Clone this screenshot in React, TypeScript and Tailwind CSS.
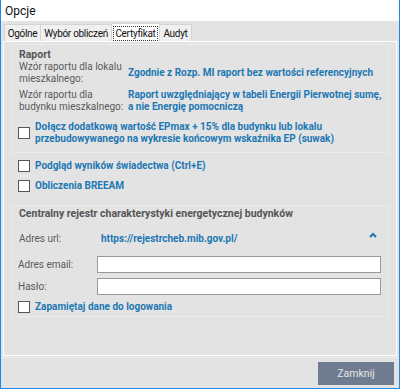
import React from "react";

const font = { fontFamily: 'Roboto, "Liberation Sans", Arial, sans-serif' };

function Check({ children, className = "" }: { children: React.ReactNode; className?: string }) {
  return (
    <div className={"flex items-center gap-[5px] " + className}>
      <div className="h-[12px] w-[12px] shrink-0 border border-[#555] bg-white" />
      <div className="whitespace-nowrap text-[10px] font-bold leading-[12px] text-[#1c78b4]">{children}</div>
    </div>
  );
}

export default function App() {
  return (
    <div
      className="flex h-[389px] w-[400px] flex-col border-b border-l border-r border-[#1e8ae6] bg-[#e3e3e3] text-[#333]"
      style={font}
    >
      <div className="flex h-[21px] shrink-0 items-center bg-white pl-[4px] text-[12px] text-[#111]">Opcje</div>
      <div className="flex h-[20px] shrink-0 items-end pl-[3px] text-[10px] tracking-[-0.3px] text-[#111]">
        <div className="flex h-[17px] w-[37px] items-center justify-center border border-b-0 border-[#d4d4d4] bg-[#f0f0f0]">Ogólne</div>
        <div className="flex h-[17px] w-[71px] items-center justify-center border border-b-0 border-l-0 border-[#d4d4d4] bg-[#f0f0f0]">Wybór obliczeń</div>
        <div className="-mb-[1px] flex h-[19px] w-[48px] items-center justify-center border border-b-0 border-l-0 border-[#d4d4d4] bg-white">
          <span className="border border-dotted border-[#333] px-[1px] leading-[13px]">Certyfikat</span>
        </div>
        <div className="flex h-[17px] w-[32px] items-center justify-center border border-b-0 border-l-0 border-[#d4d4d4] bg-[#f0f0f0]">Audyt</div>
      </div>
      <div className="mx-[2px] flex h-[315px] shrink-0 flex-col border border-white bg-[#e3e3e3] px-[8px] pt-[2px]">
        <div className="border border-[#ececec] pb-[7px] pl-[6px] pr-[6px] pt-[3px]">
          <div className="text-[10.5px] font-bold leading-[13px] text-[#555]">Raport</div>
          <div className="flex">
            <div className="w-[109px] shrink-0 whitespace-nowrap text-[10px] leading-[12px] text-[#5a5a5a]">
              Wzór raportu dla lokalu
              <br />
              mieszkalnego:
            </div>
            <div className="flex items-center whitespace-nowrap text-[10px] font-bold leading-[12px] text-[#1c78b4]">
              Zgodnie z Rozp. MI raport bez wartości referencyjnych
            </div>
          </div>
          <div className="mt-[4px] flex">
            <div className="w-[109px] shrink-0 whitespace-nowrap text-[10px] leading-[12px] text-[#5a5a5a]">
              Wzór raportu dla
              <br />
              budynku mieszkalnego:
            </div>
            <div className="whitespace-nowrap text-[10px] font-bold leading-[12px] text-[#1c78b4]">
              Raport uwzględniający w tabeli Energii Pierwotnej sumę,
              <br />a nie Energię pomocniczą
            </div>
          </div>
          <Check className="-ml-[1px] mt-[8px]">
            Dołącz dodatkową wartość EPmax + 15% dla budynku lub lokalu
            <br />
            przebudowywanego na wykresie końcowym wskaźnika EP (suwak)
          </Check>
        </div>
        <Check className="ml-[6px] mt-[7px]">Podgląd wyników świadectwa (Ctrl+E)</Check>
        <Check className="ml-[6px] mt-[8px]">Obliczenia BREEAM</Check>
        <div className="mt-[13px] border border-[#ececec] pb-[3px] pl-[6px] pr-[6px] pt-[1px]">
          <div className="whitespace-nowrap text-[10.5px] font-bold leading-[13px] text-[#555]">
            Centralny rejestr charakterystyki energetycznej budynków
          </div>
          <div className="mt-[13px] flex h-[12px] items-center">
            <div className="w-[82px] shrink-0 text-[10px] leading-[12px] text-[#5a5a5a]">Adres url:</div>
            <div className="flex-1 text-[10px] font-bold leading-[12px] text-[#1c78b4]">https://rejestrcheb.mib.gov.pl/</div>
            <svg width="8" height="6" viewBox="0 0 8 6" className="mr-[4px] -mt-[8px]">
              <path d="M1 5 L4 2 L7 5" stroke="#1c78b4" strokeWidth="2" fill="none" />
            </svg>
          </div>
          <div className="mt-[11px] flex items-center">
            <div className="w-[79px] -ml-[1px] shrink-0 text-[10px] text-[#5a5a5a]">Adres email:</div>
            <div className="h-[17px] flex-1 border border-[#999] bg-white" />
          </div>
          <div className="mt-[5px] flex items-center">
            <div className="w-[79px] -ml-[1px] shrink-0 text-[10px] text-[#5a5a5a]">Hasło:</div>
            <div className="h-[17px] flex-1 border border-[#999] bg-white" />
          </div>
          <Check className="-ml-[1px] mt-[6px]">Zapamiętaj dane do logowania</Check>
        </div>
      </div>
      <div className="mt-[1px] border-t border-[#ececec]" />
      <div className="flex flex-1 items-start justify-end pr-[5px] pt-[4px]">
        <div className="flex h-[23px] w-[76px] items-center justify-center bg-[#6f7b8f] text-[10.5px] text-[#e6e6e6]">
          Zamknij
        </div>
      </div>
    </div>
  );
}
